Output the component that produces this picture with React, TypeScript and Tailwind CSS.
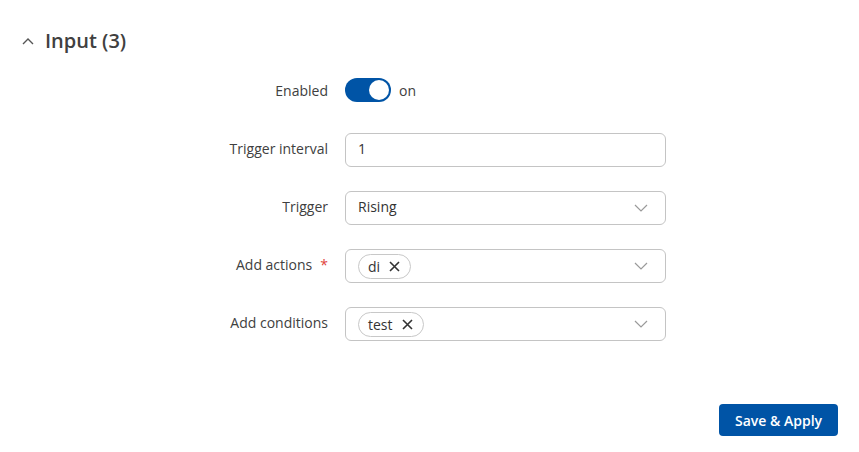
import React from 'react';

const labelCls = 'w-[328px] text-right text-[14px] text-[#404040] pb-[4px]';

const Chevron = () => (
  <svg width="14" height="8" viewBox="0 0 14 8" className="text-[#9a9a9a]">
    <polyline points="1,1 7,7 13,1" fill="none" stroke="currentColor" strokeWidth="1.2" />
  </svg>
);

const Tag = ({ text }: { text: string }) => (
  <span className="flex items-center h-[25px] pl-[9px] pr-[10px] gap-[9px] border border-[#c8c8c8] rounded-full text-[14px] text-[#333]">
    {text}
    <svg width="11" height="11" viewBox="0 0 11 11">
      <path d="M1 1L10 10M10 1L1 10" stroke="#333" strokeWidth="1.6" />
    </svg>
  </span>
);

const Row = ({ label, required, children }: { label: string; required?: boolean; children: React.ReactNode }) => (
  <div className="flex items-center h-[34px] gap-[17px]">
    <div className={labelCls}>
      {label}
      {required && <span className="text-[#e0433a] ml-[8px]">*</span>}
    </div>
    {children}
  </div>
);

export default function App() {
  return (
    <div className="w-[859px] h-[452px] bg-white flex flex-col" style={{ fontFamily: '"Open Sans", sans-serif' }}>
      <div className="flex items-center gap-[11px] pl-[22px] pt-[29px] h-[53px]">
        <svg width="12" height="8" viewBox="0 0 12 8">
          <polyline points="1,7 6,2 11,7" fill="none" stroke="#555" strokeWidth="1.4" />
        </svg>
        <span className="text-[20px] font-semibold text-[#404040] leading-6">Input (3)</span>
      </div>

      <div className="flex flex-col gap-[24px] mt-[22px]">
        <Row label="Enabled">
          <div className="flex items-center gap-[8px] pb-[4px]">
            <div className="w-[46px] h-[24px] rounded-full bg-[#0054a6] flex items-center justify-end pr-[2px]">
              <div className="w-[20px] h-[20px] rounded-full bg-white" />
            </div>
            <span className="text-[14px] text-[#404040]">on</span>
          </div>
        </Row>
        <Row label="Trigger interval">
          <div className="w-[321px] h-[34px] border border-[#c4c4c4] rounded-[6px] flex items-center px-[12px] text-[14px] text-[#333]">
            <span className="pb-[3px]">1</span>
          </div>
        </Row>
        <Row label="Trigger">
          <div className="w-[321px] h-[34px] border border-[#c4c4c4] rounded-[6px] flex items-center justify-between pl-[12px] pr-[17px] text-[14px] text-[#333]">
            <span className="pb-[3px]">Rising</span>
            <Chevron />
          </div>
        </Row>
        <Row label="Add actions" required>
          <div className="w-[321px] h-[34px] border border-[#c4c4c4] rounded-[6px] flex items-center justify-between pl-[12px] pr-[17px]">
            <Tag text="di" />
            <Chevron />
          </div>
        </Row>
        <Row label="Add conditions">
          <div className="w-[321px] h-[34px] border border-[#c4c4c4] rounded-[6px] flex items-center justify-between pl-[12px] pr-[17px]">
            <Tag text="test" />
            <Chevron />
          </div>
        </Row>
      </div>

      <div className="flex justify-end pr-[21px] mt-[63px]">
        <button className="h-[32px] w-[119px] rounded-[4px] bg-[#0054a6] text-white text-[14px] font-semibold">
          Save &amp; Apply
        </button>
      </div>
    </div>
  );
}
